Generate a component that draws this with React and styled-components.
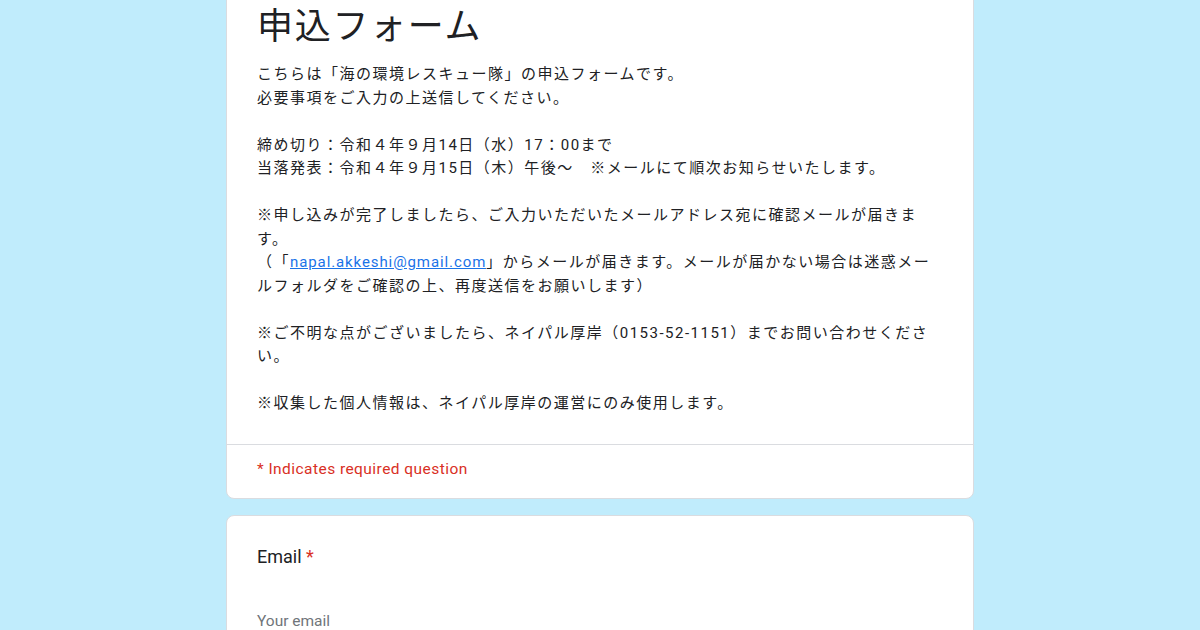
import styled, { createGlobalStyle } from "styled-components";

const GlobalStyle = createGlobalStyle`
  html, body {
    margin: 0;
    padding: 0;
    background: #c0ecfc;
  }
  body {
    font-family: Roboto, "Noto Sans CJK JP", sans-serif;
    color: #202124;
    overflow: hidden;
    text-spacing-trim: space-all;
  }
`;

const descLines = [
  "こちらは「海の環境レスキュー隊」の申込フォームです。",
  "必要事項をご入力の上送信してください。",
  "",
  "締め切り：令和４年９月14日（水）17：00まで",
  "当落発表：令和４年９月15日（木）午後～　※メールにて順次お知らせいたします。",
  "",
  "※申し込みが完了しましたら、ご入力いただいたメールアドレス宛に確認メールが届きます。",
];

const descTail = [
  "",
  "※ご不明な点がございましたら、ネイパル厚岸（0153-52-1151）までお問い合わせください。",
  "",
  "※収集した個人情報は、ネイパル厚岸の運営にのみ使用します。",
];

const App = () => {
  return (
    <>
      <GlobalStyle />
      <Page>
        <Card>
          <Header>
            <Title>申込フォーム</Title>
            <Description>
              {descLines.join("\n")}
              {"\n（「"}
              <MailLink href="#">napal.akkeshi@gmail.com</MailLink>
              {"」からメールが届きます。メールが届かない場合は迷惑メールフォルダをご確認の上、再度送信をお願いします）\n"}
              {descTail.join("\n")}
            </Description>
          </Header>
          <RequiredNote>* Indicates required question</RequiredNote>
        </Card>
        <Card>
          <Question>
            <Label>
              Email <Star>*</Star>
            </Label>
            <Placeholder>Your email</Placeholder>
          </Question>
        </Card>
      </Page>
    </>
  );
};

export default App;

const Page = styled.div`
  display: flex;
  flex-direction: column;
  align-items: center;
  gap: 16px;
  margin-top: -30px;
`;

const Card = styled.div`
  width: 748px;
  box-sizing: border-box;
  background: #fff;
  border: 1px solid #dadce0;
  border-radius: 8px;
`;

const Header = styled.div`
  padding: 28px 30px 28px;
  border-bottom: 1px solid #dadce0;
`;

const Title = styled.h1`
  margin: 0;
  font-family: "Noto Sans CJK JP", sans-serif;
  font-weight: 400;
  font-size: 36px;
  line-height: 48px;
  letter-spacing: 1.7px;
  color: #202124;
`;

const Description = styled.div`
  margin-top: 16px;
  white-space: pre-wrap;
  font-size: 15px;
  line-height: 23.5px;
  letter-spacing: 1.5px;
  color: #202124;
  padding-right: 0;
`;

const MailLink = styled.a`
  color: #1a73e8;
  text-decoration: underline;
  letter-spacing: 0.9px;
`;

const RequiredNote = styled.div`
  padding: 14px 30px 19px;
  font-size: 15.5px;
  line-height: 20px;
  color: #d93025;
  letter-spacing: 0.45px;
`;

const Question = styled.div`
  padding: 29px 30px 40px;
`;

const Label = styled.div`
  font-size: 18px;
  line-height: 24px;
  color: #202124;
`;

const Star = styled.span`
  color: #d93025;
`;

const Placeholder = styled.div`
  margin-top: 42px;
  font-size: 15.5px;
  line-height: 20px;
  color: #70757a;
`;
